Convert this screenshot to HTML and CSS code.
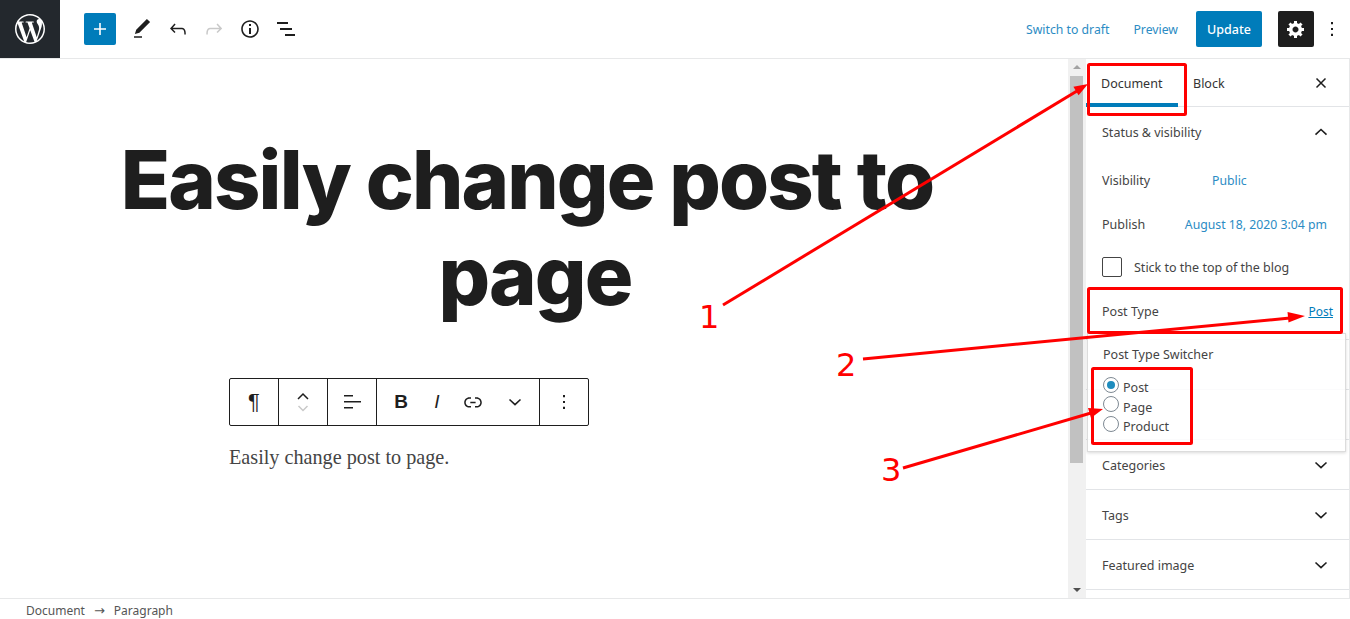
FILE: index.html
```html
<!DOCTYPE html>
<html lang="en">
<head>
  <meta charset="UTF-8" />
  <title>Easily change post to page</title>
  <link rel="stylesheet" href="styles.css">
</head>
<body>
  <header class="topbar">
    <div class="topbar-left">
      <a class="wp-logo">
        <svg width="30" height="30" viewBox="0 0 24 24"><path fill="#fff" d="M21.469 6.825c.84 1.537 1.318 3.3 1.318 5.175 0 3.979-2.156 7.456-5.363 9.325l3.295-9.527c.615-1.54.82-2.771.82-3.864 0-.405-.026-.78-.07-1.11m-7.981.105c.647-.03 1.232-.105 1.232-.105.582-.075.514-.93-.067-.899 0 0-1.755.135-2.88.135-1.064 0-2.85-.15-2.85-.15-.585-.03-.661.855-.075.885 0 0 .54.061 1.125.09l1.68 4.605-2.37 7.08L5.354 6.9c.649-.03 1.234-.1 1.234-.1.585-.075.516-.93-.065-.896 0 0-1.746.138-2.874.138-.2 0-.438-.008-.69-.015C4.911 3.15 8.235 1.215 12 1.215c2.809 0 5.365 1.072 7.286 2.833-.046-.003-.091-.009-.141-.009-1.06 0-1.812.923-1.812 1.914 0 .89.513 1.643 1.06 2.531.411.72.89 1.643.89 2.977 0 .915-.354 1.994-.821 3.479l-1.075 3.585-3.9-11.61.001.014zM12 22.784c-1.059 0-2.081-.153-3.048-.437l3.237-9.406 3.315 9.087c.024.053.05.101.078.149-1.12.393-2.325.609-3.582.609M1.211 12c0-1.564.336-3.05.935-4.39L7.29 21.709C3.694 19.96 1.212 16.271 1.211 12M12 0C5.385 0 0 5.385 0 12s5.385 12 12 12 12-5.385 12-12S18.615 0 12 0"/></svg>
      </a>
      <button class="add-btn">
        <svg width="24" height="24" viewBox="0 0 24 24"><path fill="#fff" d="M18 11.2h-5.2V6h-1.6v5.2H6v1.6h5.2V18h1.6v-5.2H18z"/></svg>
      </button>
      <button class="icon-btn">
        <svg width="24" height="24" viewBox="0 0 24 24"><path fill="#1e1e1e" d="M20.1 5.1L16.9 2 6.2 12.7l-1.3 4.4 4.5-1.3L20.1 5.1zM4 20.8h8v-1.5H4v1.5z"/></svg>
      </button>
      <button class="icon-btn">
        <svg width="24" height="24" viewBox="0 0 24 24"><path fill="#1e1e1e" d="M18.3 11.7c-.6-.6-1.4-.9-2.3-.9H6.7l2.9-3.3-1.1-1-4.5 5L8.5 16l1-1-2.7-2.7H16c.5 0 .9.2 1.3.5 1 1 1 3.4 1 4.5v.3h1.5v-.2c0-1.5 0-4.3-1.5-5.7z"/></svg>
      </button>
      <button class="icon-btn">
        <svg width="24" height="24" viewBox="0 0 24 24"><path fill="#c9c9c9" d="M15.6 6.5l-1.1 1 2.9 3.3H8c-.9 0-1.7.3-2.3.9-1.4 1.5-1.4 4.2-1.4 5.6v.2h1.5v-.3c0-1.1 0-3.5 1-4.5.3-.3.7-.5 1.3-.5h9.2L14.5 15l1.1 1.1 4.6-4.6-4.6-5z"/></svg>
      </button>
      <button class="icon-btn">
        <svg width="24" height="24" viewBox="0 0 24 24"><path fill="#1e1e1e" d="M12 3.2c-4.8 0-8.8 3.9-8.8 8.8 0 4.8 3.9 8.8 8.8 8.8 4.8 0 8.8-3.9 8.8-8.8 0-4.8-4-8.8-8.8-8.8zm0 16c-4 0-7.2-3.3-7.2-7.2C4.8 8 8 4.8 12 4.8s7.2 3.3 7.2 7.2c0 4-3.2 7.2-7.2 7.2zM11 17h2v-6h-2v6zm0-8h2V7h-2v2z"/></svg>
      </button>
      <button class="icon-btn">
        <svg width="24" height="24" viewBox="0 0 24 24"><path fill="#1e1e1e" d="M3 5h11v2H3zM6 11h12v2H6zM11 17h10v2H11z"/></svg>
      </button>
    </div>
    <div class="topbar-right">
      <a class="link-btn">Switch to draft</a>
      <a class="link-btn">Preview</a>
      <button class="update-btn">Update</button>
      <button class="gear-btn">
        <svg width="20" height="20" viewBox="0 0 20 20"><path fill="#fff" d="M18 12h-2.18c-.17.7-.44 1.35-.81 1.93l1.54 1.54-2.1 2.1-1.54-1.54c-.58.36-1.23.63-1.91.79V19H8v-2.18c-.68-.16-1.33-.43-1.91-.79l-1.54 1.54-2.12-2.12 1.54-1.54c-.36-.58-.63-1.23-.79-1.91H1V9.03h2.17c.16-.7.44-1.35.8-1.94L2.43 5.55l2.1-2.1 1.54 1.54c.58-.37 1.24-.64 1.93-.81V2h3v2.18c.68.16 1.33.43 1.91.79l1.54-1.54 2.12 2.12-1.54 1.54c.36.59.64 1.24.8 1.94H18V12zm-8.5 1.5c1.66 0 3-1.34 3-3s-1.34-3-3-3-3 1.34-3 3 1.34 3 3 3z"/></svg>
      </button>
      <button class="dots-btn">
        <svg width="24" height="24" viewBox="0 0 24 24"><path fill="#1e1e1e" d="M11 5h2v2.2h-2zM11 10.9h2v2.2h-2zM11 16.8h2V19h-2z"/></svg>
      </button>
    </div>
  </header>

  <div class="workspace">
    <main class="editor">
      <h1 class="post-title"><span class="title-line title-first">Easily change post to</span> <span class="title-line title-second">page</span></h1>
      <div class="block">
        <div class="block-toolbar">
          <div class="tool-group"><span class="tool para-mark">¶</span></div>
          <div class="tool-group">
            <span class="tool">
              <svg width="24" height="32" viewBox="0 0 24 32"><path fill="none" stroke="#1e1e1e" stroke-width="1.5" d="M7 13l5-5 5 5"/><path fill="none" stroke="#c9c9c9" stroke-width="1.5" d="M7.500 20l4.500 4.500 4.500-4.500"/></svg>
            </span>
          </div>
          <div class="tool-group">
            <span class="tool">
              <svg width="24" height="24" viewBox="0 0 24 24"><path fill="#1e1e1e" d="M4 5h9v1.500H4zM4 11h17v1.500H4zM4 17h9v1.500H4z"/></svg>
            </span>
          </div>
          <div class="tool-group format-group">
            <span class="fmt fmt-bold">B</span>
            <span class="fmt fmt-italic">I</span>
            <span class="fmt">
              <svg width="24" height="24" viewBox="0 0 24 24"><path fill="#1e1e1e" d="M15.600 7.200H14v1.500h1.600c2 0 3.700 1.700 3.700 3.700s-1.700 3.700-3.700 3.700H14v1.500h1.600c2.800 0 5.200-2.300 5.200-5.200 0-2.900-2.300-5.200-5.200-5.200zM4.700 12.400c0-2 1.700-3.700 3.700-3.700H10V7.200H8.400c-2.900 0-5.200 2.300-5.200 5.200 0 2.900 2.300 5.200 5.200 5.200H10v-1.500H8.400c-2 0-3.700-1.700-3.700-3.700zm4.600.900h5.300v-1.500H9.300v1.500z"/></svg>
            </span>
            <span class="fmt fmt-more">
              <svg width="24" height="24" viewBox="0 0 24 24"><path fill="none" stroke="#1e1e1e" stroke-width="1.600" d="M6.500 9.500l5.500 5.200 5.500-5.200"/></svg>
            </span>
          </div>
          <div class="tool-group">
            <span class="tool">
              <svg width="24" height="24" viewBox="0 0 24 24"><path fill="#1e1e1e" d="M11 5h2v2.200h-2zM11 10.900h2v2.200h-2zM11 16.800h2V19h-2z"/></svg>
            </span>
          </div>
        </div>
        <p class="post-para">Easily change post to page.</p>
      </div>
    </main>

    <div class="scrollbar">
      <span class="scroll-up"></span>
      <div class="scroll-thumb"></div>
      <span class="scroll-down"></span>
    </div>

    <aside class="sidebar">
      <div class="tabs">
        <span class="tab tab-active">Document</span>
        <span class="tab">Block</span>
        <svg class="tab-close" width="24" height="24" viewBox="0 0 24 24"><path fill="none" stroke="#1e1e1e" stroke-width="1.500" d="M7.500 7.500l9 9M16.500 7.500l-9 9"/></svg>
      </div>

      <section class="status-panel">
        <div class="panel-head">
          <span>Status &amp; visibility</span>
          <svg width="24" height="24" viewBox="0 0 24 24"><path fill="none" stroke="#1e1e1e" stroke-width="1.600" d="M6.500 14.700l5.500-5.200 5.500 5.200"/></svg>
        </div>
        <div class="field-row visibility-row"><span>Visibility</span><a class="value">Public</a></div>
        <div class="field-row publish-row"><span>Publish</span><a class="value">August 18, 2020 3:04 pm</a></div>
        <label class="stick-row"><span class="checkbox"></span>Stick to the top of the blog</label>
        <div class="field-row type-row"><span>Post Type</span><a class="post-link">Post</a></div>
      </section>

      <div class="panel-row panel-empty"></div>
      <div class="panel-row panel-empty"></div>
      <div class="panel-row"><span>Categories</span><svg width="24" height="24" viewBox="0 0 24 24"><path fill="none" stroke="#1e1e1e" stroke-width="1.600" d="M6.500 9.500l5.500 5.200 5.500-5.200"/></svg></div>
      <div class="panel-row"><span>Tags</span><svg width="24" height="24" viewBox="0 0 24 24"><path fill="none" stroke="#1e1e1e" stroke-width="1.600" d="M6.500 9.500l5.500 5.200 5.500-5.200"/></svg></div>
      <div class="panel-row"><span>Featured image</span><svg width="24" height="24" viewBox="0 0 24 24"><path fill="none" stroke="#1e1e1e" stroke-width="1.600" d="M6.500 9.500l5.500 5.200 5.500-5.200"/></svg></div>

      <div class="type-popover">
        <div class="popover-title">Post Type Switcher</div>
        <label class="radio-row"><span class="radio radio-on"></span>Post</label>
        <label class="radio-row"><span class="radio"></span>Page</label>
        <label class="radio-row"><span class="radio"></span>Product</label>
      </div>
    </aside>
  </div>

  <footer class="breadcrumb">
    <span>Document</span><span class="crumb-arrow">→</span><span>Paragraph</span>
  </footer>

  <!-- red notes drawn over the screenshot -->
  <svg class="notes" width="1350" height="619" viewBox="0 0 1350 619">
    <g fill="none" stroke="#f00" stroke-width="3">
      <rect x="1088.500" y="64.500" width="97" height="50" rx="1"/>
      <rect x="1088.500" y="288.500" width="253" height="44" rx="1"/>
      <rect x="1092.500" y="368.500" width="99" height="75" rx="1"/>
      <path d="M723 305L1077 91"/>
      <path d="M863 359L1290 318"/>
      <path d="M903 468L1091 413"/>
    </g>
    <g fill="#f00">
      <path d="M1088 84L1078.600 95.300L1073.400 86.700z"/>
      <path d="M1305 316L1288.500 322.500L1287.500 312z"/>
      <path d="M1103 409L1091 418L1088 408z"/>
    </g>
    <text class="note-num" x="699" y="328">1</text>
    <text class="note-num" x="836" y="376">2</text>
    <text class="note-num" x="881" y="481">3</text>
  </svg>
</body>
</html>
```

FILE: styles.css
```css
* {
  box-sizing: border-box;
}

body {
  margin: 0;
  height: 100vh;
  display: flex;
  flex-direction: column;
  overflow: hidden;
  background: #fff;
  color: #1e1e1e;
  font-family: "Noto Sans", "Open Sans", sans-serif;
  font-size: 12.500px;
}

button {
  border: none;
  background: none;
  padding: 0;
  font: inherit;
  display: flex;
  align-items: center;
  justify-content: center;
}

svg {
  display: block;
}

.topbar {
  height: 59px;
  flex: none;
  display: flex;
  justify-content: space-between;
  border-bottom: 1px solid #e7e8e9;
}

.topbar-left,
.topbar-right {
  display: flex;
  align-items: center;
}

.wp-logo {
  width: 60px;
  height: 58px;
  background: #23282d;
  display: flex;
  align-items: center;
  justify-content: center;
}

.add-btn {
  width: 32px;
  height: 32px;
  margin: 0 8px 0 24px;
  background: #007cba;
  border-radius: 2px;
}

.icon-btn {
  width: 36px;
  height: 36px;
}

.topbar-right {
  padding-right: 6px;
}

.link-btn {
  color: #2b8cc4;
  font-size: 12.250px;
  margin-right: 24px;
}

.link-btn + .link-btn {
  margin-right: 18px;
}

.update-btn {
  width: 66px;
  height: 36px;
  background: #007cba;
  color: #fff;
  font-weight: 500;
  border-radius: 2px;
  margin-right: 16px;
}

.gear-btn {
  width: 36px;
  height: 36px;
  background: #1e1e1e;
  border-radius: 2px;
  margin-right: 6px;
}

.dots-btn {
  width: 24px;
  height: 36px;
}

.workspace {
  flex: 1;
  display: flex;
  min-height: 0;
}

.editor {
  width: 1068px;
  flex: none;
  padding-right: 10px;
  display: flex;
  flex-direction: column;
  align-items: center;
}

.post-title {
  margin: 73px 0 0;
  display: flex;
  flex-direction: column;
  align-items: center;
  font-family: Inter, sans-serif;
  font-size: 81px;
  font-weight: 800;
  line-height: 96px;
  letter-spacing: -1.900px;
  color: #1e1e1e;
}

.title-first {
  margin-left: -4px;
}

.title-second {
  margin-left: 12px;
}

.block {
  width: 600px;
  margin-top: 54px;
}

.block-toolbar {
  display: flex;
  width: 360px;
  height: 48px;
  border: 1px solid #1e1e1e;
  border-radius: 2px;
}

.tool-group {
  display: flex;
  align-items: center;
  border-right: 1px solid #1e1e1e;
}

.tool-group:last-child {
  border-right: none;
}

.tool {
  width: 48px;
  display: flex;
  align-items: center;
  justify-content: center;
}

.para-mark {
  font-family: "Liberation Sans", sans-serif;
  font-size: 22px;
}

.format-group {
  padding-left: 6px;
}

.fmt {
  width: 36px;
  display: flex;
  justify-content: center;
  align-items: center;
  font-family: "Liberation Sans", sans-serif;
  font-size: 19px;
}

.fmt-bold {
  font-weight: 700;
}

.fmt-italic {
  font-style: italic;
}

.fmt-more {
  width: 48px;
}

.post-para {
  margin: 18px 0 0;
  font-family: "Liberation Serif", serif;
  font-size: 20.200px;
  line-height: 26px;
  color: #444;
}

.scrollbar {
  width: 18px;
  flex: none;
  background: #f1f1f1;
  display: flex;
  flex-direction: column;
  align-items: center;
  position: relative;
}

.scroll-up {
  margin-top: 6px;
  border: 4px solid transparent;
  border-top: none;
  border-bottom: 4px solid #a3a3a3;
}

.scroll-thumb {
  width: 13px;
  height: 387px;
  margin-top: 7px;
  margin-right: 1px;
  background: #c1c1c1;
}

.scroll-down {
  margin-top: auto;
  margin-bottom: 6px;
  border: 4px solid transparent;
  border-bottom: none;
  border-top: 4px solid #505050;
}

.sidebar {
  flex: 1;
  position: relative;
  border-right: 1px solid #e7e8e9;
  overflow: hidden;
  color: #444;
}

.tabs {
  height: 48px;
  display: flex;
  align-items: center;
  border-bottom: 1px solid #e2e4e7;
  position: relative;
}

.tab {
  padding: 1px 0 0 15px;
  color: #333;
}

.tab-active {
  width: 92px;
  height: 48px;
  line-height: 48px;
  border-bottom: 4px solid #007cba;
}

.tab-close {
  margin-left: auto;
  margin-right: 16px;
}

.status-panel {
  height: 233px;
  border-bottom: 1px solid #e2e4e7;
}

.panel-head {
  height: 50px;
  padding: 0 16px;
  display: flex;
  align-items: center;
  justify-content: space-between;
}

.field-row {
  display: flex;
  align-items: center;
  padding: 0 22px 0 16px;
  justify-content: space-between;
}

.value {
  color: #2b8cc4;
  font-size: 12.250px;
}

.visibility-row {
  height: 46px;
  justify-content: flex-start;
}

.visibility-row span {
  width: 110px;
}

.publish-row {
  height: 42px;
}

.stick-row {
  height: 44px;
  padding-left: 16px;
  display: flex;
  align-items: center;
  gap: 12px;
}

.checkbox {
  width: 20px;
  height: 20px;
  border: 1px solid #444;
  border-radius: 2px;
}

.type-row {
  height: 44px;
  padding-right: 16px;
}

.post-link {
  color: #007cba;
  font-size: 12px;
  text-decoration: underline;
}

.panel-row {
  height: 50px;
  padding: 1px 16px 0;
  display: flex;
  align-items: center;
  justify-content: space-between;
  border-bottom: 1px solid #e2e4e7;
}

.type-popover {
  position: absolute;
  left: 1px;
  top: 274px;
  width: 259px;
  height: 119px;
  padding: 14px 15px;
  background: rgba(255, 255, 255, 0.85);
  border: 1px solid #dcdcdc;
  box-shadow: 0 1px 3px rgba(0, 0, 0, 0.15);
}

.popover-title {
  line-height: 14px;
  margin-bottom: 16px;
}

.radio-row {
  height: 19.500px;
  display: flex;
  align-items: center;
  gap: 4px;
}

.radio {
  width: 16px;
  height: 16px;
  border: 1px solid #7e8993;
  border-radius: 50%;
  background: #fff;
  position: relative;
  top: -3px;
}

.radio-on::after {
  content: "";
  position: absolute;
  left: 3px;
  top: 3px;
  width: 8px;
  height: 8px;
  border-radius: 50%;
  background: #1e8cbe;
}

.breadcrumb {
  height: 21px;
  flex: none;
  padding: 2px 0 0 26px;
  display: flex;
  align-items: center;
  border-top: 1px solid #e7e8e9;
  color: #555;
  font-size: 12px;
}

.crumb-arrow {
  margin: 0 9px;
  font-family: "DejaVu Sans", sans-serif;
  font-size: 13px;
}

.notes {
  position: absolute;
  left: 0;
  top: 0;
  pointer-events: none;
}

.note-num {
  font-family: "DejaVu Sans", sans-serif;
  font-size: 32px;
  fill: #f00;
}
```
